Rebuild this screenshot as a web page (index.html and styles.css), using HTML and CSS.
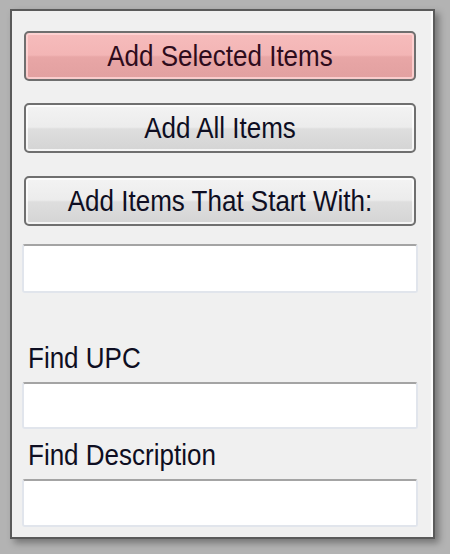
FILE: index.html
```html
<!DOCTYPE html>
<html>
<head>
<meta charset="utf-8">
<link rel="stylesheet" href="styles.css">
</head>
<body>
<div class="panel">
  <button class="btn btn-selected"><span class="txt">Add Selected Items</span></button>
  <button class="btn btn-all"><span class="txt">Add All Items</span></button>
  <button class="btn btn-start"><span class="txt">Add Items That Start With:</span></button>
  <div class="field field-start"></div>
  <div class="label label-upc"><span class="txt">Find UPC</span></div>
  <div class="field field-upc"></div>
  <div class="label label-desc"><span class="txt">Find Description</span></div>
  <div class="field field-desc"></div>
</div>
</body>
</html>
```
FILE: styles.css
```css
html, body {
  margin: 0;
  padding: 0;
}
body {
  background: #b3b3b3;
  width: 450px;
  height: 554px;
  padding: 9px 0 0 10px;
  box-sizing: border-box;
  font-family: "Liberation Sans", Arial, sans-serif;
}
.panel {
  width: 425px;
  height: 530px;
  box-sizing: border-box;
  background: #f0f0f0;
  border: 2px solid #5a5a5a;
  box-shadow: inset -2px 0 0 #fbfbfb, 4px 4px 7px rgba(0,0,0,0.35);
  display: flex;
  flex-direction: column;
  align-items: flex-start;
}
.txt {
  display: inline-block;
  transform: scaleY(1.15);
}
.btn {
  margin-left: 12px;
  width: 392px;
  height: 50px;
  box-sizing: border-box;
  border: 2px solid #6f6f6f;
  border-radius: 5px;
  padding: 0;
  font-family: inherit;
  font-size: 26px;
  line-height: 30px;
  color: #0e0e22;
  display: flex;
  align-items: center;
  justify-content: center;
  box-shadow: inset 0 0 0 2px rgba(255,255,255,0.75);
}
.btn-selected {
  margin-top: 20px;
  background: linear-gradient(#f6bcbc 0%, #f3b5b5 48%, #e8a6a6 52%, #e2a0a0 100%);
  color: #2e0c1c;
  box-shadow: inset 0 0 0 2px rgba(255,215,215,0.8);
}
.btn-all {
  margin-top: 22px;
  background: linear-gradient(#f3f3f3 0%, #ececec 48%, #dedede 52%, #d4d4d4 100%);
}
.btn-start {
  margin-top: 23px;
  background: linear-gradient(#f3f3f3 0%, #ececec 48%, #dedede 52%, #d4d4d4 100%);
}
.field {
  margin-left: 10px;
  width: 396px;
  box-sizing: border-box;
  background: #ffffff;
  border: 2px solid #e1e5ec;
  border-top: 2px solid #a4a4a4;
  border-radius: 3px;
}
.field-start {
  margin-top: 18px;
  height: 49px;
}
.field-upc {
  margin-top: 9px;
  height: 47px;
}
.field-desc {
  margin-top: 9px;
  height: 48px;
}
.label {
  margin-left: 16px;
  font-size: 26px;
  line-height: 30px;
  color: #0e0e22;
}
.label-upc {
  margin-top: 50px;
}
.label-desc {
  margin-top: 11px;
}
```
